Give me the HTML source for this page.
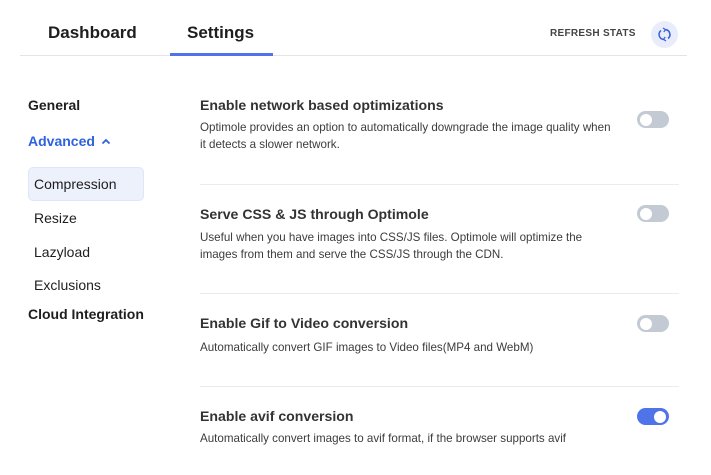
<!DOCTYPE html>
<html><head><style>
*{margin:0;padding:0;box-sizing:border-box}
body{width:711px;height:475px;background:#fff;font-family:"Liberation Sans",Arial,sans-serif;position:relative;overflow:hidden;color:#1e1e1e}
.a{position:absolute;white-space:nowrap}
.tab{font-size:17px;font-weight:bold;top:23px;color:#1e1e1e}
.h{font-size:14.1px;font-weight:bold;color:#333;left:200px}
.d{font-size:11.6px;color:#3c3c3c;left:200px;line-height:17px}
.nav{font-size:14px;font-weight:bold;left:28px}
.sub{font-size:14px;left:34px;color:#1e1e1e}
.sep{position:absolute;left:200px;width:479px;height:1px;background:#ececec}
.tg{position:absolute;left:637px;width:32px;height:17px;border-radius:9px;background:#c3cad3}
.tg::after{content:"";position:absolute;left:3px;top:2.5px;width:12px;height:12px;border-radius:50%;background:#fff}
.tg.on{background:#4f74ea}
.tg.on::after{left:17px}
</style></head><body>
<div class="a tab" style="left:48px">Dashboard</div>
<div class="a tab" style="left:187px">Settings</div>
<div class="a" style="left:20px;top:55px;width:667px;height:1px;background:#e4e4e4"></div>
<div class="a" style="left:170px;top:53px;width:103px;height:3px;background:#4f74ea"></div>
<div class="a" style="left:550px;top:28px;font-size:10px;font-weight:bold;color:#444;letter-spacing:.3px">REFRESH STATS</div>
<div class="a" style="left:651px;top:21px;width:27px;height:27px;border-radius:50%;background:#e9edfb"></div>
<svg class="a" style="left:657px;top:27px" width="15" height="15" viewBox="0 0 15 15"><path d="M4 3.5A5 5 0 0 0 6.5 12.4M11 11.5A5 5 0 0 0 8.5 2.6" fill="none" stroke="#3d63e0" stroke-width="1.6"/><path d="M6 1l2.5 1.7L6.8 5M9 14l-2.5-1.7L8.2 10" fill="none" stroke="#3d63e0" stroke-width="1.3"/></svg>

<div class="a nav" style="top:97px">General</div>
<div class="a nav" style="top:133px;color:#2e62e0">Advanced</div>
<svg class="a" style="left:101px;top:138px" width="10" height="7" viewBox="0 0 10 7"><path d="M1.5 5.5L5 2l3.5 3.5" fill="none" stroke="#2e62e0" stroke-width="1.8"/></svg>
<div class="a" style="left:28px;top:167px;width:116px;height:34px;border-radius:5px;background:#edf1fc;border:1px solid #dfe6f8"></div>
<div class="a sub" style="top:176px">Compression</div>
<div class="a sub" style="top:210px">Resize</div>
<div class="a sub" style="top:244px">Lazyload</div>
<div class="a sub" style="top:277px">Exclusions</div>
<div class="a nav" style="top:306px">Cloud Integration</div>

<div class="a h" style="top:97px">Enable network based optimizations</div>
<div class="a d" style="top:119px">Optimole provides an option to automatically downgrade the image quality when<br>it detects a slower network.</div>
<div class="tg" style="top:111px"></div>
<div class="sep" style="top:184px"></div>

<div class="a h" style="top:206px">Serve CSS &amp; JS through Optimole</div>
<div class="a d" style="top:229px">Useful when you have images into CSS/JS files. Optimole will optimize the<br>images from them and serve the CSS/JS through the CDN.</div>
<div class="tg" style="top:205px"></div>
<div class="sep" style="top:293px"></div>

<div class="a h" style="top:315px">Enable Gif to Video conversion</div>
<div class="a d" style="top:339px">Automatically convert GIF images to Video files(MP4 and WebM)</div>
<div class="tg" style="top:315px"></div>
<div class="sep" style="top:386px"></div>

<div class="a h" style="top:408px">Enable avif conversion</div>
<div class="a d" style="top:430px">Automatically convert images to avif format, if the browser supports avif</div>
<div class="tg on" style="top:408px"></div>
</body></html>
